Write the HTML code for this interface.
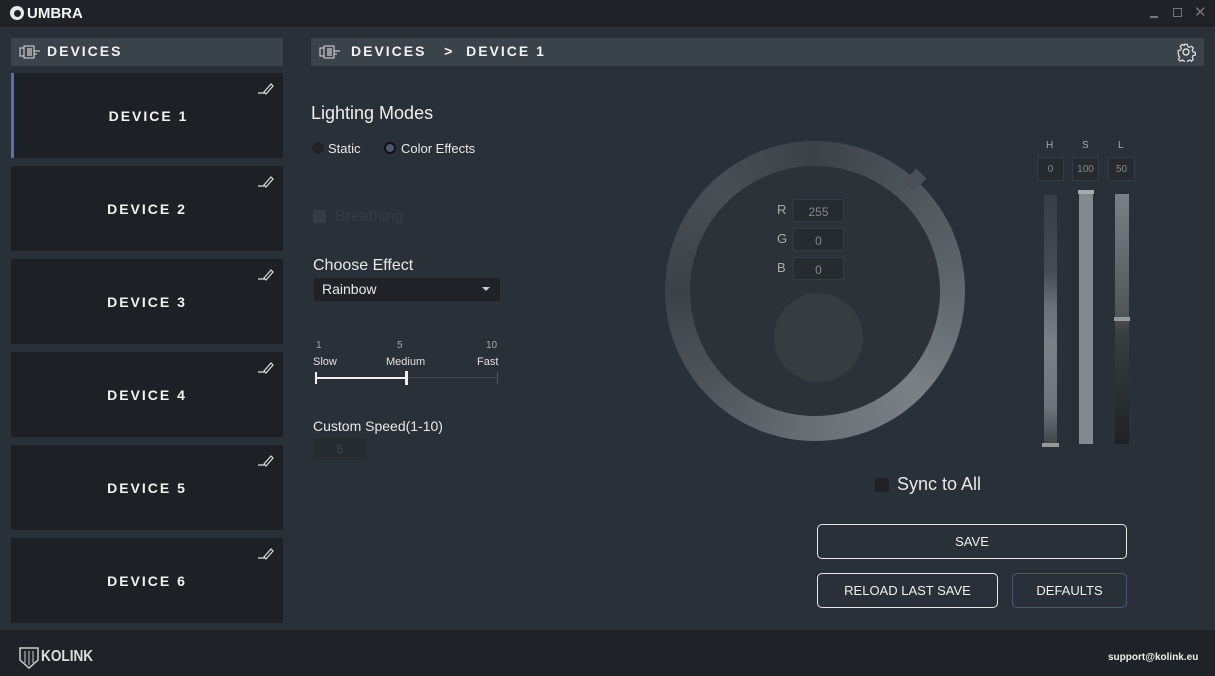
<!DOCTYPE html>
<html><head><style>
*{margin:0;padding:0;box-sizing:border-box}
body{width:1215px;height:676px;background:#2a3037;font-family:"Liberation Sans",sans-serif;color:#e8e8e8;position:relative;overflow:hidden}
.abs{position:absolute}
.title{left:0;top:0;width:1215px;height:27px;background:#1f2327}
.foot{left:0;top:630px;width:1215px;height:46px;background:#1f2327}
.bar{background:#3a424a;height:28px}
.bold{font-weight:bold;letter-spacing:2px;font-size:14px;color:#f2f2f2}
.card{left:11px;width:272px;height:85px;background:#1d2024;display:flex;align-items:center;justify-content:center}
.pen{position:absolute;right:8px;top:8px}
.small{font-size:11px;color:#e0e0e0}
.box{background:#262b30;border:1px solid #353b42;color:#888;font-size:10px;text-align:center}
.btn{border:1.5px solid #e8e8e8;border-radius:5px;font-size:13px;display:flex;align-items:center;justify-content:center;color:#f0f0f0}
</style></head><body>
<div class="abs title"></div>
<div class="abs" style="left:10px;top:6px;width:14px;height:14px;border-radius:50%;background:#e8e8e8"></div>
<div class="abs" style="left:14px;top:10px;width:7px;height:7px;border-radius:50%;background:#1f2327"></div>
<div class="abs" style="left:27px;top:5px;font-weight:bold;font-size:15px;color:#f4f4f4">UMBRA</div>
<div class="abs" style="left:1150px;top:16px;width:8px;height:1.5px;background:#777"></div>
<div class="abs" style="left:1173px;top:8px;width:9px;height:9px;border:1.5px solid #777"></div>
<div class="abs" style="left:1194px;top:3px;color:#777;font-size:15px">✕</div>

<div class="abs bar" style="left:11px;top:38px;width:272px"></div>
<svg class="abs" style="left:19px;top:45px" width="24" height="14"><rect x="1" y="3" width="4" height="8" fill="none" stroke="#ddd"/><rect x="5" y="1" width="10" height="12" fill="none" stroke="#ddd"/><rect x="8" y="3" width="5" height="8" fill="#999"/><path d="M15 6h6M15 9h3" stroke="#ddd"/></svg>
<div class="abs bold" style="left:47px;top:43px">DEVICES</div>

<div class="abs bar" style="left:311px;top:38px;width:893px"></div>
<svg class="abs" style="left:319px;top:45px" width="24" height="14"><rect x="1" y="3" width="4" height="8" fill="none" stroke="#ddd"/><rect x="5" y="1" width="10" height="12" fill="none" stroke="#ddd"/><rect x="8" y="3" width="5" height="8" fill="#999"/><path d="M15 6h6M15 9h3" stroke="#ddd"/></svg>
<div class="abs bold" style="left:351px;top:43px">DEVICES&nbsp;&nbsp;&nbsp;&gt;&nbsp;&nbsp;DEVICE 1</div>
<svg class="abs" style="left:1176px;top:42px" width="20" height="20" viewBox="0 0 20 20"><path d="M8.5 1.5h3l.5 2.5 2 1 2.2-1.3 2.1 2.1-1.3 2.2 1 2 2.5.5v3l-2.5.5-1 2 1.3 2.2-2.1 2.1-2.2-1.3-2 1-.5 2.5h-3l-.5-2.5-2-1-2.2 1.3-2.1-2.1 1.3-2.2-1-2L1.5 11.5v-3L4 8l1-2-1.3-2.2 2.1-2.1L8 3z" fill="none" stroke="#ddd" stroke-width="1.4" transform="scale(.9) translate(1 1)"/><circle cx="10" cy="10" r="3" fill="none" stroke="#ddd" stroke-width="1.4"/></svg>

<div class="abs card" style="top:73px;border-left:3px solid #5a6fae"><span class="bold">DEVICE 1</span><svg class="pen" width="18" height="14"><path d="M1 12h7M7 11l7-8 2 2-7 8z" fill="none" stroke="#ddd" stroke-width="1.2"/></svg></div>
<div class="abs card" style="top:166px"><span class="bold">DEVICE 2</span><svg class="pen" width="18" height="14"><path d="M1 12h7M7 11l7-8 2 2-7 8z" fill="none" stroke="#ddd" stroke-width="1.2"/></svg></div>
<div class="abs card" style="top:259px"><span class="bold">DEVICE 3</span><svg class="pen" width="18" height="14"><path d="M1 12h7M7 11l7-8 2 2-7 8z" fill="none" stroke="#ddd" stroke-width="1.2"/></svg></div>
<div class="abs card" style="top:352px"><span class="bold">DEVICE 4</span><svg class="pen" width="18" height="14"><path d="M1 12h7M7 11l7-8 2 2-7 8z" fill="none" stroke="#ddd" stroke-width="1.2"/></svg></div>
<div class="abs card" style="top:445px"><span class="bold">DEVICE 5</span><svg class="pen" width="18" height="14"><path d="M1 12h7M7 11l7-8 2 2-7 8z" fill="none" stroke="#ddd" stroke-width="1.2"/></svg></div>
<div class="abs card" style="top:538px"><span class="bold">DEVICE 6</span><svg class="pen" width="18" height="14"><path d="M1 12h7M7 11l7-8 2 2-7 8z" fill="none" stroke="#ddd" stroke-width="1.2"/></svg></div>

<div class="abs" style="left:311px;top:103px;font-size:18px;color:#eee">Lighting Modes</div>
<div class="abs" style="left:312px;top:142px;width:12px;height:12px;border-radius:50%;background:#1f2328"></div>
<div class="abs" style="left:328px;top:141px;font-size:13px">Static</div>
<div class="abs" style="left:384px;top:142px;width:12px;height:12px;border-radius:50%;background:#4a5570;border:2px solid #111"></div>
<div class="abs" style="left:401px;top:141px;font-size:13px">Color Effects</div>
<div class="abs" style="left:313px;top:210px;width:13px;height:13px;background:#363c43"></div>
<div class="abs" style="left:335px;top:208px;font-size:16px;color:#363c43">Breathing</div>
<div class="abs" style="left:313px;top:257px;font-size:16px">Choose Effect</div>
<div class="abs" style="left:314px;top:278px;width:186px;height:23px;background:#1f2328;font-size:14px;padding:3px 8px">Rainbow</div>
<div class="abs" style="left:482px;top:287px;border:4px solid transparent;border-top:4px solid #ccc"></div>
<div class="abs small" style="left:316px;top:340px;font-size:10px;color:#aaa">1</div>
<div class="abs small" style="left:397px;top:340px;font-size:10px;color:#aaa">5</div>
<div class="abs small" style="left:486px;top:340px;font-size:10px;color:#aaa">10</div>
<div class="abs small" style="left:313px;top:356px">Slow</div>
<div class="abs small" style="left:386px;top:356px">Medium</div>
<div class="abs small" style="left:477px;top:356px">Fast</div>
<div class="abs" style="left:316px;top:377px;width:91px;height:2px;background:#eee"></div>
<div class="abs" style="left:407px;top:377px;width:91px;height:1px;background:#444b52"></div>
<div class="abs" style="left:315px;top:372px;width:2px;height:12px;background:#eee"></div>
<div class="abs" style="left:405px;top:371px;width:3px;height:14px;background:#eee"></div>
<div class="abs" style="left:497px;top:372px;width:1px;height:12px;background:#555"></div>
<div class="abs" style="left:313px;top:418px;font-size:14px">Custom Speed(1-10)</div>
<div class="abs" style="left:314px;top:438px;width:52px;height:22px;background:#262b30;color:#444;font-size:12px;text-align:center;padding-top:4px">5</div>

<div class="abs" style="left:665px;top:141px;width:300px;height:300px;border-radius:50%;background:conic-gradient(#3c4248,#4e555b,#60676d,#7a8085,#6a7075,#50565c,#3c4248,#484e54,#3c4248)"></div>
<div class="abs" style="left:690px;top:166px;width:250px;height:250px;border-radius:50%;background:#2c3237"></div>
<div class="abs" style="left:906px;top:173px;width:18px;height:14px;background:#4a5056;transform:rotate(-45deg)"></div>
<div class="abs" style="left:777px;top:202px;font-size:13px;color:#aaa">R</div>
<div class="abs" style="left:777px;top:231px;font-size:13px;color:#aaa">G</div>
<div class="abs" style="left:777px;top:260px;font-size:13px;color:#aaa">B</div>
<div class="abs box" style="left:793px;top:199px;width:51px;height:23px;padding-top:5px;font-size:12px">255</div>
<div class="abs box" style="left:793px;top:228px;width:51px;height:23px;padding-top:5px;font-size:12px">0</div>
<div class="abs box" style="left:793px;top:257px;width:51px;height:23px;padding-top:5px;font-size:12px">0</div>
<div class="abs" style="left:774px;top:293px;width:89px;height:89px;border-radius:50%;background:#363c40"></div>

<div class="abs small" style="left:1046px;top:140px;color:#aaa;font-size:10px">H</div>
<div class="abs small" style="left:1082px;top:140px;color:#aaa;font-size:10px">S</div>
<div class="abs small" style="left:1118px;top:140px;color:#aaa;font-size:10px">L</div>
<div class="abs box" style="left:1037px;top:157px;width:27px;height:24px;padding-top:6px">0</div>
<div class="abs box" style="left:1072px;top:157px;width:27px;height:24px;padding-top:6px">100</div>
<div class="abs box" style="left:1108px;top:157px;width:27px;height:24px;padding-top:6px">50</div>
<div class="abs" style="left:1044px;top:195px;width:13px;height:250px;background:linear-gradient(#383e44,#454b50 30%,#6a7075 45%,#7a8085 60%,#6e7479 85%,#3e4448)"></div>
<div class="abs" style="left:1042px;top:443px;width:17px;height:4px;background:#999"></div>
<div class="abs" style="left:1079px;top:193px;width:14px;height:251px;background:#838a8f"></div>
<div class="abs" style="left:1078px;top:190px;width:16px;height:4px;background:#aaa"></div>
<div class="abs" style="left:1115px;top:194px;width:14px;height:250px;background:linear-gradient(#7a8085,#50565a 48%,#383e42 55%,#1e2226)"></div>
<div class="abs" style="left:1114px;top:317px;width:16px;height:4px;background:#999"></div>

<div class="abs" style="left:875px;top:478px;width:14px;height:14px;background:#1f2328"></div>
<div class="abs" style="left:897px;top:474px;font-size:18px">Sync to All</div>
<div class="abs btn" style="left:817px;top:524px;width:310px;height:35px">SAVE</div>
<div class="abs btn" style="left:817px;top:573px;width:181px;height:35px">RELOAD LAST SAVE</div>
<div class="abs btn" style="left:1012px;top:573px;width:115px;height:35px;border-color:#4a5680">DEFAULTS</div>

<div class="abs foot"></div>
<svg class="abs" style="left:18px;top:646px" width="22" height="23"><path d="M2 2h18v12l-9 8-9-8z" fill="none" stroke="#ccc" stroke-width="1.5"/><path d="M7 5v12M11 5v14M15 5v12" stroke="#ccc"/></svg>
<div class="abs" style="left:41px;top:648px;font-weight:bold;font-size:16px;color:#ddd;transform:scaleX(.85);transform-origin:left">KOLINK</div>
<div class="abs" style="left:1108px;top:652px;font-weight:bold;font-size:10px;color:#eee">support@kolink.eu</div>
</body></html>
